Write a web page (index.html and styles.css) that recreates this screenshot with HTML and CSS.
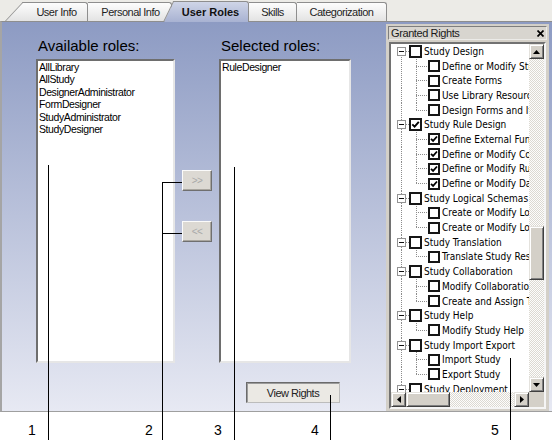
FILE: index.html
```html
<!DOCTYPE html>
<html lang="en">
<head>
<meta charset="utf-8">
<title>User Roles</title>
<link rel="stylesheet" href="styles.css">
</head>
<body>
<div class="screen">
  <div class="tabstrip">
    <div class="tab t-userinfo slant">User Info</div>
    <div class="tab t-personal">Personal Info</div>
    <div class="tab t-roles active slant">User Roles</div>
    <div class="tab t-skills">Skills</div>
    <div class="tab t-cat">Categorization</div>
  </div>

  <div class="panel">
    <div class="col col-avail">
      <h2 class="col-title">Available roles:</h2>
      <ul class="listbox">
        <li>AllLibrary</li>
        <li>AllStudy</li>
        <li>DesignerAdministrator</li>
        <li>FormDesigner</li>
        <li>StudyAdministrator</li>
        <li>StudyDesigner</li>
      </ul>
    </div>

    <div class="movebtns">
      <button class="mv">&gt;&gt;</button>
      <button class="mv">&lt;&lt;</button>
    </div>

    <div class="col col-sel">
      <h2 class="col-title">Selected roles:</h2>
      <ul class="listbox">
        <li>RuleDesigner</li>
      </ul>
      <button class="viewrights">View Rights</button>
    </div>

    <div class="granted">
      <div class="gr-head">
        <span>Granted Rights</span>
        <svg class="gr-close" width="7" height="7" viewBox="0 0 7 7"><path d="M0.5 0.5 L6.5 6.5 M6.5 0.5 L0.5 6.5" stroke="#000" stroke-width="1.7" fill="none"/></svg>
      </div>
      <div class="gr-frame">
        <div class="tree">
          <div class="tr root first"><span class="g g-root"><span class="exp"></span></span><span class="cb cb-root"></span><span class="lbl">Study Design</span></div>
          <div class="tr"><span class="g g-root"></span><span class="g g-child"></span><span class="cb"></span><span class="lbl">Define or Modify Study Properties</span></div>
          <div class="tr"><span class="g g-root"></span><span class="g g-child"></span><span class="cb"></span><span class="lbl">Create Forms</span></div>
          <div class="tr"><span class="g g-root"></span><span class="g g-child"></span><span class="cb"></span><span class="lbl">Use Library Resources</span></div>
          <div class="tr"><span class="g g-root"></span><span class="g g-child last"></span><span class="cb"></span><span class="lbl">Design Forms and Items</span></div>

          <div class="tr root"><span class="g g-root"><span class="exp"></span></span><span class="cb cb-root"><svg width="9" height="9" viewBox="0 0 9 9"><path d="M1.3 4.3 L3.6 6.6 L7.8 1.8" stroke="#000" stroke-width="1.9" fill="none"/></svg></span><span class="lbl">Study Rule Design</span></div>
          <div class="tr"><span class="g g-root"></span><span class="g g-child"></span><span class="cb"><svg width="8" height="8" viewBox="0 0 8 8"><path d="M1 3.8 L3.1 5.9 L7 1.5" stroke="#000" stroke-width="1.8" fill="none"/></svg></span><span class="lbl">Define External Functions</span></div>
          <div class="tr"><span class="g g-root"></span><span class="g g-child"></span><span class="cb"><svg width="8" height="8" viewBox="0 0 8 8"><path d="M1 3.8 L3.1 5.9 L7 1.5" stroke="#000" stroke-width="1.8" fill="none"/></svg></span><span class="lbl">Define or Modify Conditions</span></div>
          <div class="tr"><span class="g g-root"></span><span class="g g-child"></span><span class="cb"><svg width="8" height="8" viewBox="0 0 8 8"><path d="M1 3.8 L3.1 5.9 L7 1.5" stroke="#000" stroke-width="1.8" fill="none"/></svg></span><span class="lbl">Define or Modify Rules</span></div>
          <div class="tr"><span class="g g-root"></span><span class="g g-child last"></span><span class="cb"><svg width="8" height="8" viewBox="0 0 8 8"><path d="M1 3.8 L3.1 5.9 L7 1.5" stroke="#000" stroke-width="1.8" fill="none"/></svg></span><span class="lbl">Define or Modify Data Items</span></div>

          <div class="tr root"><span class="g g-root"><span class="exp"></span></span><span class="cb cb-root"></span><span class="lbl">Study Logical Schemas</span></div>
          <div class="tr"><span class="g g-root"></span><span class="g g-child"></span><span class="cb"></span><span class="lbl">Create or Modify Logical Schemas</span></div>
          <div class="tr"><span class="g g-root"></span><span class="g g-child last"></span><span class="cb"></span><span class="lbl">Create or Modify Logical Mappings</span></div>

          <div class="tr root"><span class="g g-root"><span class="exp"></span></span><span class="cb cb-root"></span><span class="lbl">Study Translation</span></div>
          <div class="tr"><span class="g g-root"></span><span class="g g-child last"></span><span class="cb"></span><span class="lbl">Translate Study Resources</span></div>

          <div class="tr root"><span class="g g-root"><span class="exp"></span></span><span class="cb cb-root"></span><span class="lbl">Study Collaboration</span></div>
          <div class="tr"><span class="g g-root"></span><span class="g g-child"></span><span class="cb"></span><span class="lbl">Modify Collaboration Settings</span></div>
          <div class="tr"><span class="g g-root"></span><span class="g g-child last"></span><span class="cb"></span><span class="lbl">Create and Assign Tasks</span></div>

          <div class="tr root"><span class="g g-root"><span class="exp"></span></span><span class="cb cb-root"></span><span class="lbl">Study Help</span></div>
          <div class="tr"><span class="g g-root"></span><span class="g g-child last"></span><span class="cb"></span><span class="lbl">Modify Study Help</span></div>

          <div class="tr root"><span class="g g-root"><span class="exp"></span></span><span class="cb cb-root"></span><span class="lbl">Study Import Export</span></div>
          <div class="tr"><span class="g g-root"></span><span class="g g-child"></span><span class="cb"></span><span class="lbl">Import Study</span></div>
          <div class="tr"><span class="g g-root"></span><span class="g g-child last"></span><span class="cb"></span><span class="lbl">Export Study</span></div>

          <div class="tr root"><span class="g g-root"><span class="exp"></span></span><span class="cb cb-root"></span><span class="lbl">Study Deployment</span></div>
        </div>

        <div class="vscroll">
          <div class="sb-btn"><svg width="7" height="4" viewBox="0 0 7 4"><path d="M3.5 0 L7 4 L0 4Z" fill="#000"/></svg></div>
          <div class="sb-track track-a"></div>
          <div class="sb-btn sb-thumb-v"></div>
          <div class="sb-track track-b"></div>
          <div class="sb-btn"><svg width="7" height="4" viewBox="0 0 7 4"><path d="M0 0 L7 0 L3.5 4Z" fill="#000"/></svg></div>
        </div>

        <div class="hscroll">
          <div class="sb-btn"><svg width="4" height="7" viewBox="0 0 4 7"><path d="M4 0 L4 7 L0 3.5Z" fill="#000"/></svg></div>
          <div class="sb-btn sb-thumb-h"></div>
          <div class="sb-track track-b"></div>
          <div class="sb-btn"><svg width="4" height="7" viewBox="0 0 4 7"><path d="M0 0 L4 3.5 L0 7Z" fill="#000"/></svg></div>
        </div>

        <div class="corner"></div>
      </div>
    </div>
  </div>

  <div class="annot">
    <div class="vl a1"></div>
    <div class="vl a2"></div>
    <div class="hl h2a"></div>
    <div class="hl h2b"></div>
    <div class="vl a3"></div>
    <div class="vl a4"></div>
    <div class="vl a5"></div>
    <span class="num n1">1</span>
    <span class="num n2">2</span>
    <span class="num n3">3</span>
    <span class="num n4">4</span>
    <span class="num n5">5</span>
  </div>
</div>
</body>
</html>
```

FILE: styles.css
```css
* { box-sizing: border-box; }

html, body { margin: 0; padding: 0; }

body {
  width: 552px;
  height: 440px;
  overflow: hidden;
  background: #fff;
  font-family: "Liberation Sans", Arial, sans-serif;
  color: #000;
}

.screen {
  position: relative;
  width: 552px;
  height: 440px;
}

/* ---------- tabs ---------- */
.tabstrip {
  position: relative;
  z-index: 0;
  display: flex;
  align-items: flex-end;
  height: 21px;
  background: #ecebe7;
}

.tab {
  position: relative;
  flex: none;
  height: 19px;
  border-top: 1px solid #8e8e8e;
  border-right: 1px solid #8e8e8e;
  border-radius: 0 3px 0 0;
  background: linear-gradient(#fdfdfd, #e3e3e3);
  font-size: 11px;
  letter-spacing: -0.5px;
  line-height: 18px;
  text-align: center;
  color: #1e1e1e;
  white-space: nowrap;
}

.tab.slant::before {
  content: "";
  position: absolute;
  top: -1px;
  bottom: 0;
  border-top: 1px solid #8e8e8e;
  border-left: 1px solid #8e8e8e;
  background: inherit;
  transform-origin: 0 100%;
  z-index: -1;
}

.t-userinfo {
  z-index: 1;
  margin-left: 23px;
  width: 65px;
  padding-left: 3px;
}
.t-userinfo::before {
  left: -18px;
  width: 30px;
  transform: skewX(-43deg);
}

.t-personal { width: 84px; padding-left: 2px; }

.t-roles {
  z-index: 2;
  margin-left: 1px;
  width: 76px;
  height: 21px;
  margin-bottom: -1px;
  line-height: 20px;
  font-weight: bold;
  letter-spacing: 0;
  color: #111;
  background: linear-gradient(#cfd5e7, #a8b2d2);
}
.t-roles::before {
  left: -10px;
  width: 20px;
  transform: skewX(-26deg);
}

.t-skills { width: 48px; }
.t-cat { width: 90px; }

/* ---------- main panel ---------- */
.panel {
  display: flex;
  height: 391px;
  border-top: 1px solid #8e8e8e;
  border-left: 2px solid #a5a5a5;
  border-bottom: 1px solid #9f9f9f;
  background: linear-gradient(#8d9bc3, #e7e9f3);
}

.col {
  flex: none;
  padding-top: 14px;
}

.col-avail { margin-left: 34px; width: 139px; }
.col-sel { margin-left: 7px; width: 132px; }

.col-title {
  margin: 0 0 4px 2px;
  font-size: 15px;
  font-weight: normal;
  line-height: 19px;
  white-space: nowrap;
  color: #000;
}

.listbox {
  list-style: none;
  margin: 0;
  padding: 0 0 0 1px;
  height: 304px;
  background: #fff;
  border: 2px solid;
  border-color: #6e6e6e #e6e6e6 #e6e6e6 #6e6e6e;
  font-size: 10.5px;
  letter-spacing: -0.4px;
  line-height: 12.4px;
  white-space: nowrap;
  overflow: hidden;
}

.movebtns {
  flex: none;
  margin-left: 7px;
  width: 30px;
  padding-top: 148px;
  display: flex;
  flex-direction: column;
  gap: 30px;
}

.mv {
  width: 30px;
  height: 21px;
  padding: 0;
  margin: 0;
  background: #dcd9d3;
  border: 1px solid;
  border-color: #fbfbfb #6f6f6f #6f6f6f #fbfbfb;
  box-shadow: inset -1px -1px #a9a69f;
  font-family: "Liberation Sans", Arial, sans-serif;
  font-size: 10px;
  letter-spacing: -0.5px;
  color: #a9a9a9;
}

.viewrights {
  display: block;
  margin: 19px 0 0 27px;
  width: 94px;
  height: 21px;
  padding: 0;
  background: #ebe9e4;
  border: 1px solid;
  border-color: #6b6b6b #bcbcbc #bcbcbc #6b6b6b;
  box-shadow: inset 1px 1px #9b9b9b;
  font-family: "Liberation Sans", Arial, sans-serif;
  font-size: 11px;
  letter-spacing: -0.5px;
  color: #222;
}

/* ---------- granted rights ---------- */
.granted {
  flex: none;
  margin: 2px 3px 0 auto;
  width: 163px;
  height: 387px;
  padding: 1px;
  border: 1px solid #d2cfc8;
  background: #d4d0c8;
  display: flex;
  flex-direction: column;
}

.gr-head {
  flex: none;
  height: 14px;
  display: flex;
  align-items: center;
  justify-content: space-between;
  padding: 0 2px 0 2px;
  border: 1px solid;
  border-color: #7e7e7e #ecebe8 #ecebe8 #7e7e7e;
  background: #d8d5cf;
  font-size: 11px;
  letter-spacing: -0.4px;
  color: #1a1a1a;
  white-space: nowrap;
}

.gr-close { display: block; }

.gr-frame {
  flex: none;
  margin: 2px 1px 0;
  width: 157px;
  height: 367px;
  border: 2px solid;
  border-color: #727272 #f5f5f5 #f5f5f5 #727272;
  display: grid;
  grid-template-columns: 138px 15px;
  grid-template-rows: 348px 15px;
}

.tree {
  overflow: hidden;
  background: #fff;
  font-family: "DejaVu Sans Condensed", "Liberation Sans", sans-serif;
  font-size: 10px;
  white-space: nowrap;
  color: #000;
}

.tr {
  display: flex;
  align-items: center;
  height: 14.7px;
}

.g {
  flex: none;
  align-self: stretch;
  display: flex;
  align-items: center;
  background-repeat: no-repeat;
}

.g-root {
  width: 18px;
  background-image: repeating-linear-gradient(to bottom, #8c8c8c 0 1px, transparent 1px 2px);
  background-size: 1px 100%;
  background-position: 10px 0;
}

.tr.root .g-root {
  background-image:
    repeating-linear-gradient(to bottom, #8c8c8c 0 1px, transparent 1px 2px),
    repeating-linear-gradient(to right, #8c8c8c 0 1px, transparent 1px 2px);
  background-size: 1px 100%, 4px 1px;
  background-position: 10px 0, 15px 50%;
}

.tr.root.first .g-root {
  background-size: 1px 50%, 4px 1px;
  background-position: 10px 100%, 15px 50%;
}

.g-child {
  width: 19px;
  background-image:
    repeating-linear-gradient(to bottom, #8c8c8c 0 1px, transparent 1px 2px),
    repeating-linear-gradient(to right, #8c8c8c 0 1px, transparent 1px 2px);
  background-size: 1px 100%, 12px 1px;
  background-position: 7px 0, 7px 50%;
}

.g-child.last {
  background-size: 1px 50%, 12px 1px;
  background-position: 7px 0, 7px 50%;
}

.exp {
  display: block;
  margin-left: 6px;
  width: 9px;
  height: 9px;
  border: 1px solid #939393;
  background: #fff linear-gradient(#111, #111) center / 5px 1px no-repeat;
}

.cb {
  flex: none;
  width: 12px;
  height: 12px;
  margin-right: 2px;
  border: 2px solid #161616;
  background: #fff;
  display: flex;
  align-items: center;
  justify-content: center;
}

.cb-root { width: 13px; height: 13px; }

.cb svg { display: block; }

.lbl { flex: none; }

/* ---------- scrollbars ---------- */
.vscroll {
  display: flex;
  flex-direction: column;
}

.hscroll {
  display: flex;
}

.sb-btn {
  flex: none;
  width: 15px;
  height: 15px;
  background: #d4d0c8;
  border: 1px solid;
  border-color: #e4e2dd #404040 #404040 #e4e2dd;
  box-shadow: inset 1px 1px #fff, inset -1px -1px #808080;
  display: flex;
  align-items: center;
  justify-content: center;
}

.sb-btn svg { display: block; }

.sb-track {
  background: repeating-conic-gradient(#fdfdfc 0 25%, #dcd9d2 0 50%) 0 0 / 2px 2px;
}

.track-a { flex: none; height: 167px; }
.track-b { flex: 1; }

.sb-thumb-v { height: 54px; }
.sb-thumb-h { width: 44px; }

.corner { background: #d4d0c8; }

/* ---------- annotations (callouts over the screenshot) ---------- */
.annot {
  position: absolute;
  inset: 0;
  pointer-events: none;
}

.vl {
  position: absolute;
  bottom: 0;
  width: 1px;
  background: #000;
}

.a1 { left: 48px; top: 165px; }
.a2 { left: 162px; top: 182px; }
.a3 { left: 234px; top: 167px; }
.a4 { left: 330px; top: 395px; }
.a5 { left: 510px; top: 358px; }

.hl {
  position: absolute;
  left: 162px;
  width: 20px;
  height: 1px;
  background: #000;
}
.h2a { top: 182px; }
.h2b { top: 233px; }

.num {
  position: absolute;
  top: 422px;
  font-size: 14px;
  line-height: 16px;
  color: #000;
}
.n1 { left: 28px; }
.n2 { left: 145px; }
.n3 { left: 214px; }
.n4 { left: 311px; }
.n5 { left: 491px; }
```
